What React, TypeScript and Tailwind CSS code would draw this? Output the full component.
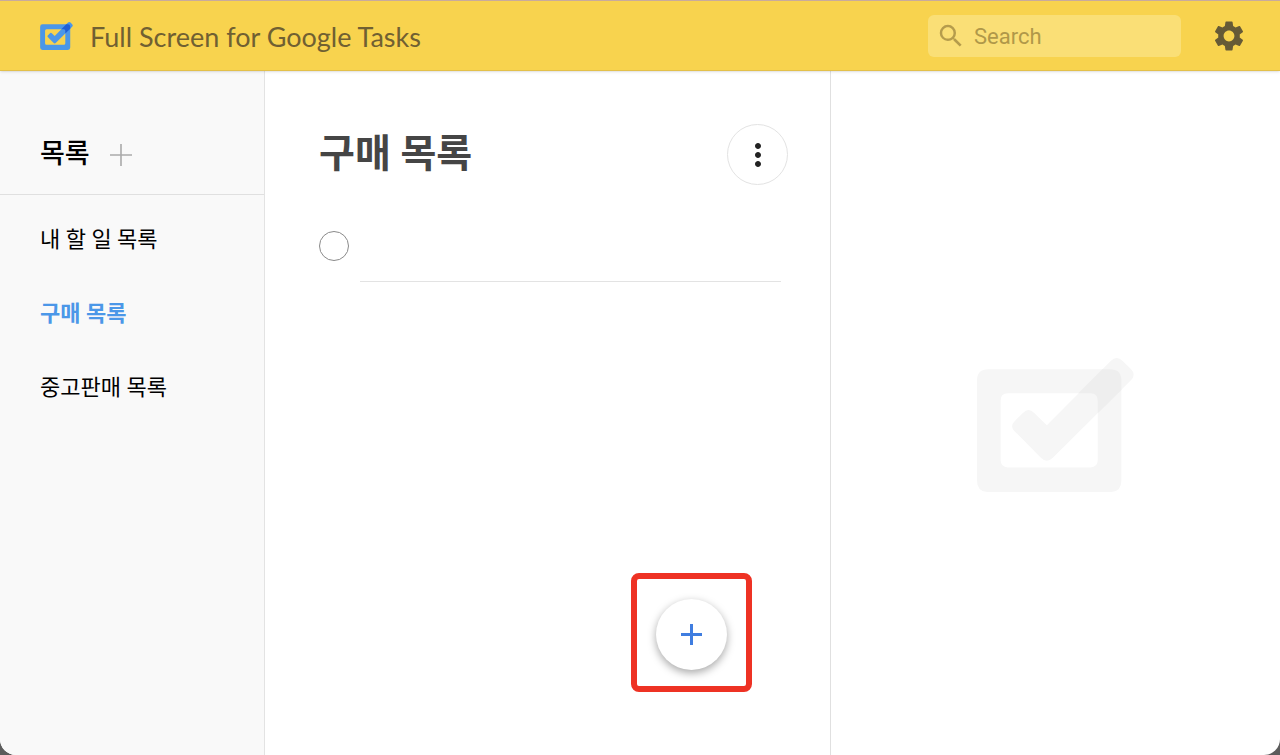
import { MdMoreVert, MdSearch, MdSettings } from 'react-icons/md';

const lists = [
  { name: '내 할 일 목록', active: false },
  { name: '구매 목록', active: true },
  { name: '중고판매 목록', active: false },
];

function TasksLogo({ className, overlapClass }: { className: string; overlapClass: string }) {
  return (
    <svg viewBox="48 52 472 404" className={className} fill="currentColor" aria-hidden="true">
      <path
        fillRule="evenodd"
        d="M82 86H448Q482 86 482 120V421Q482 455 448 455H82Q48 455 48 421V120Q48 86 82 86ZM141 158Q119 158 119 180V359Q119 381 141 381H389Q411 381 411 359V180Q411 158 389 158Z"
      />
      <path d="M161 242L186 217Q203 200 220 217L258 254L450 61Q468 43 486 61L510 84Q528 102 510 120L276 352Q258 370 240 352L161 272Q146 257 161 242Z" />
      <path
        className={overlapClass}
        d="M353 158L425 86H448Q482 86 482 120V148L411 218V180Q411 158 389 158Z"
      />
    </svg>
  );
}

function Header() {
  return (
    <header className="relative z-10 flex h-[71px] items-center border-t border-b border-t-[#c9ab9c] border-b-[#e3c04a] bg-[#f8d34e] pr-[33px] pl-10 shadow-sm">
      <TasksLogo className="h-7 w-[33px] text-[#4b97e8]" overlapClass="text-[#1f5fd6] fill-current" />
      <h1 className="ml-[17px] pt-1 font-['Lato','Liberation_Sans',sans-serif] text-[27px] text-[#706032]">
        Full Screen for Google Tasks
      </h1>
      <label className="ml-auto flex h-[42px] w-[253px] items-center rounded-md bg-[#fadf76] pl-2">
        <MdSearch className="size-[30px] shrink-0 text-[#b59c4c]" />
        <input
          type="search"
          placeholder="Search"
          aria-label="Search"
          className="ml-2 w-full min-w-0 bg-transparent pt-0.5 font-['Roboto',sans-serif] text-[22px] text-[#706032] outline-none placeholder:text-[#b09849]"
        />
      </label>
      <button type="button" aria-label="Settings" className="ml-[30px] text-[#665a36]">
        <MdSettings className="size-9" />
      </button>
    </header>
  );
}

function Sidebar() {
  return (
    <aside className="w-[265px] shrink-0 border-r border-[#e3e3e3] bg-[#f9f9f9]">
      <div className="flex h-[124px] items-center border-b border-[#e0e0e0] px-10 pt-11">
        <h2 className="text-[27px] font-medium text-black">목록</h2>
        <button type="button" aria-label="Add list" className="ml-5 text-[#aaaaaa]">
          <svg viewBox="0 0 22 22" className="size-[22px]" stroke="currentColor" strokeWidth="1.6">
            <path d="M11 0V22M0 11H22" />
          </svg>
        </button>
      </div>
      <nav className="pt-[7px]">
        {lists.map((list) => (
          <a
            key={list.name}
            href="#"
            className={`flex h-[74px] items-center px-10 text-[22px] ${
              list.active ? 'font-bold text-[#4b97e8]' : 'text-black'
            }`}
          >
            {list.name}
          </a>
        ))}
      </nav>
    </aside>
  );
}

function TaskList() {
  return (
    <main className="flex min-w-0 flex-1 flex-col border-r border-[#e0e0e0]">
      <div className="flex items-center justify-between pt-[53px] pr-[42px] pl-[54px]">
        <h2 className="text-[39px] leading-none font-bold text-[#454545]">구매 목록</h2>
        <button
          type="button"
          aria-label="More options"
          className="flex size-[61px] items-center justify-center rounded-full border border-[#e3e3e3] text-[#222222]"
        >
          <MdMoreVert className="size-9" />
        </button>
      </div>
      <div className="mt-9 flex items-start pr-[49px] pl-[54px]">
        <input
          type="checkbox"
          aria-label="Complete task"
          className="mt-2.5 size-[30px] shrink-0 appearance-none rounded-full border border-[#8a8a8a]"
        />
        <input
          type="text"
          aria-label="Task title"
          className="ml-[11px] h-[61px] min-w-0 flex-1 border-b border-[#e3e3e3] pb-3 text-[22px] outline-none"
        />
      </div>
      <div className="mt-auto mr-[78px] mb-[63px] flex h-[119px] w-[121px] items-center justify-center self-end rounded-lg border-6 border-[#ee3224] pt-1">
        <button
          type="button"
          aria-label="Add task"
          className="flex size-[71px] items-center justify-center rounded-full bg-white text-[#3f7de0] shadow-[0_3px_8px_rgba(0,0,0,0.35)]"
        >
          <svg viewBox="0 0 21 21" className="size-[21px]" stroke="currentColor" strokeWidth="3">
            <path d="M10.5 0V21M0 10.5H21" />
          </svg>
        </button>
      </div>
    </main>
  );
}

export default function App() {
  return (
    <div className="min-h-screen bg-[#5c5c5c]">
      <div className="flex min-h-screen flex-col overflow-hidden rounded-b-2xl bg-white font-['Roboto','Noto_Sans_CJK_KR',sans-serif]">
        <Header />
        <div className="flex flex-1">
          <Sidebar />
          <TaskList />
          <section className="flex w-[449px] shrink-0 items-center justify-center pt-6">
            <TasksLogo className="w-[157px] text-[#f6f6f6]" overlapClass="text-[#eeeeee] fill-current" />
          </section>
        </div>
      </div>
    </div>
  );
}
